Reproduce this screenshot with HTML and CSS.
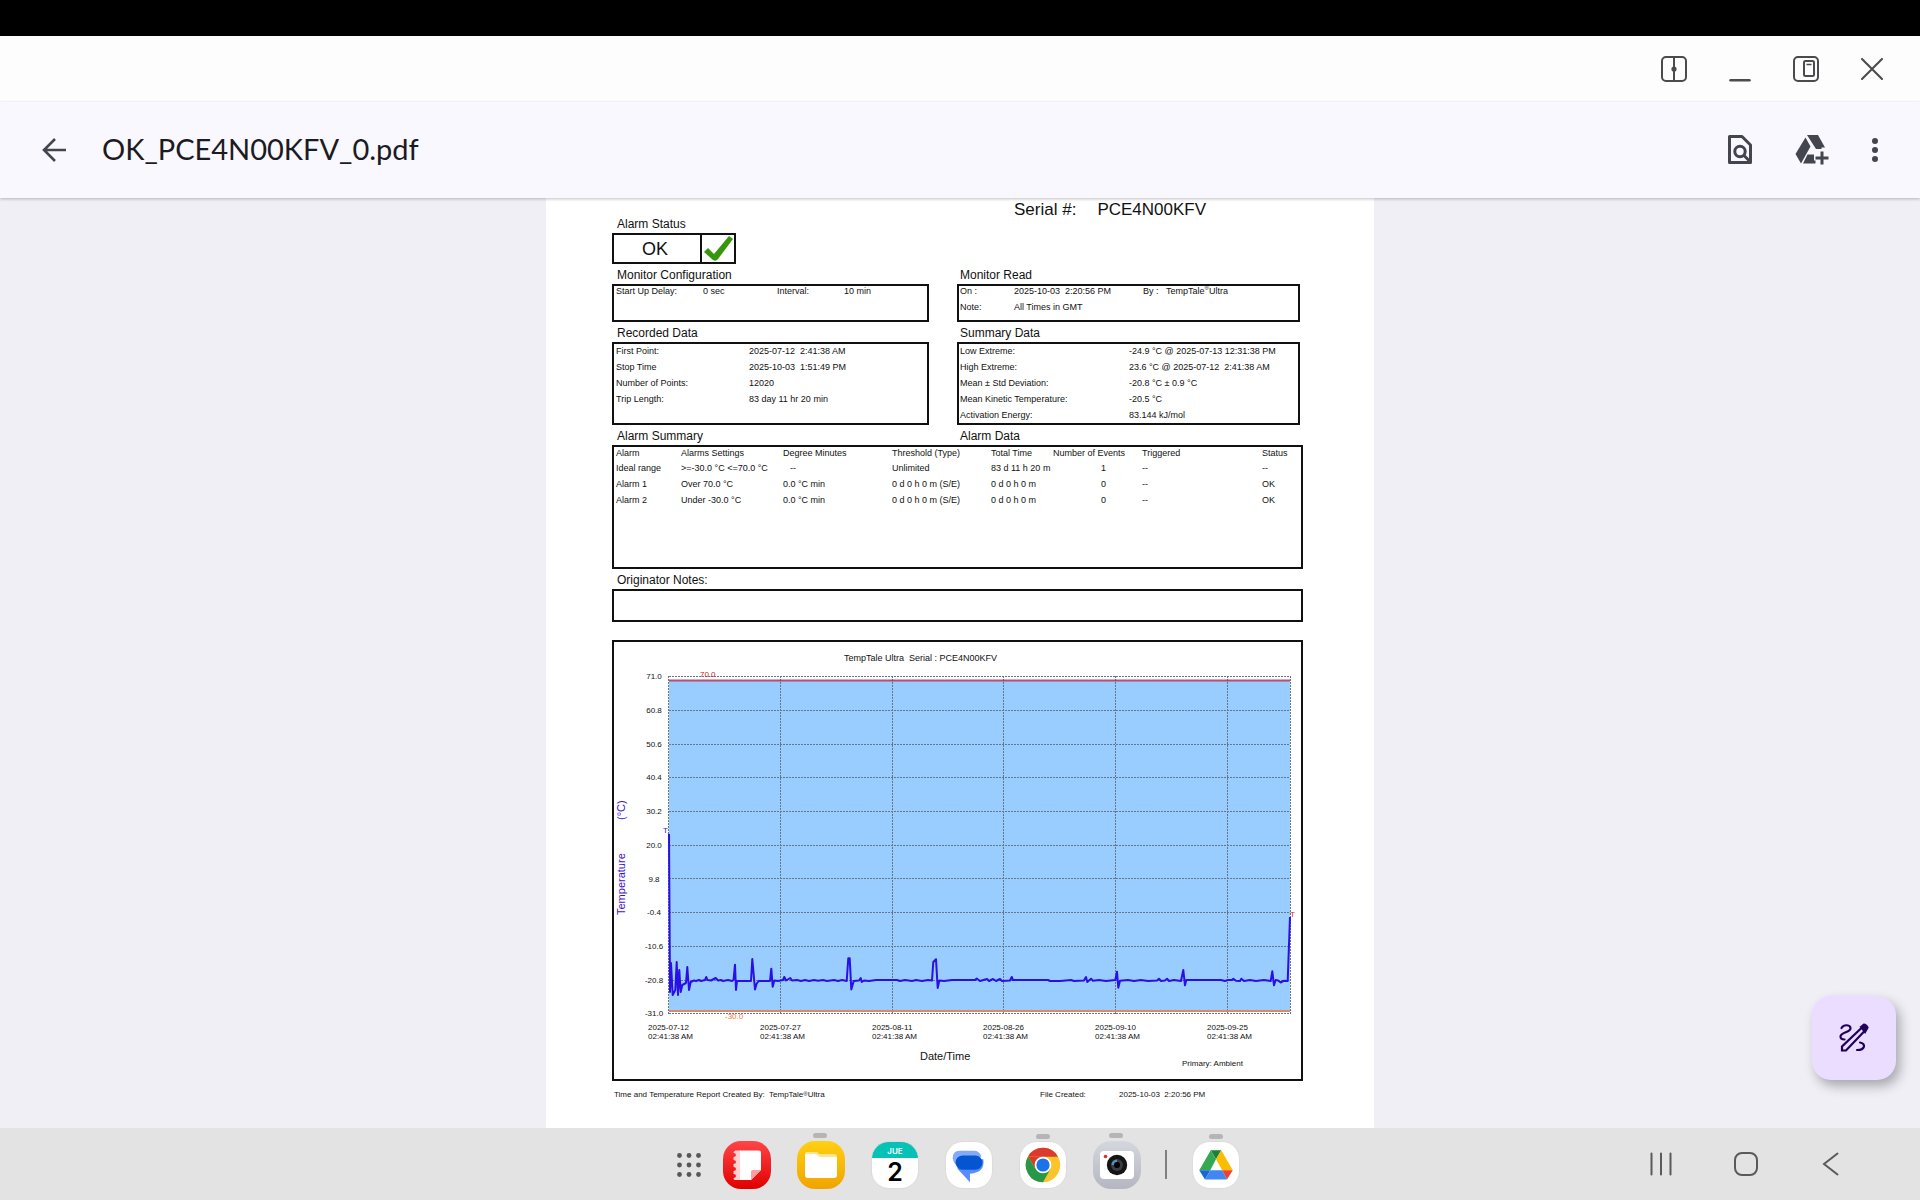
FILE: index.html
```html
<!DOCTYPE html>
<html lang="es">
<head>
    <meta charset="UTF-8">
    <meta name="viewport" content="width=device-width, initial-scale=1.0">
    <title>OK_PCE4N00KFV_0.pdf</title>
    <link rel="stylesheet" href="styles.css">
</head>
<body>
    <div class="status-strip"></div>

    <div class="window-bar">
        <button class="icon-btn" aria-label="Split screen">
            <svg width="28" height="28" viewBox="0 0 28 28" fill="none" stroke="#4b4b4d" stroke-width="2"><rect x="2" y="2" width="24" height="24" rx="4"/><path d="M14 2v24"/><circle cx="14" cy="14" r="1.6" fill="#4b4b4d"/></svg>
        </button>
        <button class="icon-btn" aria-label="Minimize">
            <svg width="28" height="28" viewBox="0 0 28 28" stroke="#4b4b4d" stroke-width="2.4" stroke-linecap="round"><path d="M4.500 25.300h19"/></svg>
        </button>
        <button class="icon-btn" aria-label="Pop-up view">
            <svg width="28" height="28" viewBox="0 0 28 28" fill="none" stroke="#4b4b4d" stroke-width="2"><rect x="2" y="2" width="24" height="24" rx="4"/><rect x="12" y="6" width="10" height="15" rx="1.500"/><path d="M14.500 9.500h5" stroke-width="1.500"/></svg>
        </button>
        <button class="icon-btn" aria-label="Close">
            <svg width="28" height="28" viewBox="0 0 28 28" stroke="#4b4b4d" stroke-width="2.100" stroke-linecap="round"><path d="M4 4l20 20M24 4L4 24"/></svg>
        </button>
    </div>

    <header class="app-bar">
        <button class="icon-btn" aria-label="Back">
            <svg width="28" height="28" viewBox="0 0 28 28" fill="none" stroke="#44464f" stroke-width="2.600"><path d="M26 14H4M15 3L4 14l11 11"/></svg>
        </button>
        <h1>OK_PCE4N00KFV_0.pdf</h1>
        <div class="app-actions">
            <button class="icon-btn" aria-label="Find in file">
                <svg width="32" height="32" viewBox="0 0 32 32" fill="none" stroke="#44464f" stroke-width="3"><path d="M5.500 2.500h12.500l8.500 8.500v17.500h-21z" stroke-linejoin="round"/><circle cx="16" cy="17.500" r="5.200"/><path d="M19.500 21l6.500 6.500"/></svg>
            </button>
            <button class="icon-btn" aria-label="Add to Drive">
                <svg width="36" height="32" viewBox="0 0 36 32" fill="#44464f"><path d="M13 1h11l7 12.500h-3.500v1.500h-5.500zM11.500 3.500l5 9L7 29.500 1.500 20zM13.500 20.500h6.500v6h1.500v3H9z"/><path d="M26.500 17.500h3v5h5v3h-5v5h-3v-5h-5v-3h5z"/></svg>
            </button>
            <button class="icon-btn more" aria-label="More options">
                <svg width="16" height="28" viewBox="0 0 16 28" fill="#44464f"><circle cx="8" cy="5" r="3"/><circle cx="8" cy="14" r="3"/><circle cx="8" cy="23" r="3"/></svg>
            </button>
        </div>
    </header>

    <main class="viewer">
        <article class="page">
            <div class="columns">
                <section class="alarm-status">
                    <h2>Alarm Status</h2>
                    <div class="box status-box">
                        <span>OK</span>
                        <svg width="32" height="27" viewBox="0 0 32 27"><path d="M2 17l4-4 6 6L27 1l4 3-15 20q-2 3-5 1z" fill="#37960b"/></svg>
                    </div>
                </section>
                <p class="serial"><span>Serial #:</span><span>PCE4N00KFV</span></p>
            </div>

            <div class="columns">
                <section>
                    <h2>Monitor Configuration</h2>
                    <dl class="box small-box config">
                        <dt>Start Up Delay:</dt><dd>0 sec</dd>
                        <dt>Interval:</dt><dd>10 min</dd>
                    </dl>
                </section>
                <section class="right">
                    <h2>Monitor Read</h2>
                    <dl class="box small-box read">
                        <dt>On :</dt><dd>2025-10-03&nbsp; 2:20:56 PM</dd>
                        <dt>By :</dt><dd>TempTale<sup>®</sup>Ultra</dd>
                        <dt>Note:</dt><dd>All Times in GMT</dd>
                    </dl>
                </section>
            </div>

            <div class="columns">
                <section>
                    <h2>Recorded Data</h2>
                    <dl class="box data-box recorded">
                        <dt>First Point:</dt><dd>2025-07-12&nbsp; 2:41:38 AM</dd>
                        <dt>Stop Time</dt><dd>2025-10-03&nbsp; 1:51:49 PM</dd>
                        <dt>Number of Points:</dt><dd>12020</dd>
                        <dt>Trip Length:</dt><dd>83 day 11 hr 20 min</dd>
                    </dl>
                </section>
                <section class="right">
                    <h2>Summary Data</h2>
                    <dl class="box data-box summary">
                        <dt>Low Extreme:</dt><dd>-24.9 °C @ 2025-07-13 12:31:38 PM</dd>
                        <dt>High Extreme:</dt><dd>23.6 °C @ 2025-07-12&nbsp; 2:41:38 AM</dd>
                        <dt>Mean ± Std Deviation:</dt><dd>-20.8 °C ± 0.9 °C</dd>
                        <dt>Mean Kinetic Temperature:</dt><dd>-20.5 °C</dd>
                        <dt>Activation Energy:</dt><dd>83.144 kJ/mol</dd>
                    </dl>
                </section>
            </div>

            <section>
                <div class="columns">
                    <h2>Alarm Summary</h2>
                    <h2 class="right-title">Alarm Data</h2>
                </div>
                <div class="box alarm-box">
                    <table>
                        <colgroup>
                            <col class="c-alarm"><col class="c-settings"><col class="c-degree"><col class="c-threshold">
                            <col class="c-total"><col class="c-events"><col class="c-triggered"><col>
                        </colgroup>
                        <thead>
                            <tr><th>Alarm</th><th>Alarms Settings</th><th>Degree Minutes</th><th>Threshold (Type)</th><th>Total Time</th><th>Number of Events</th><th>Triggered</th><th>Status</th></tr>
                        </thead>
                        <tbody>
                            <tr><td>Ideal range</td><td>&gt;=-30.0 °C &lt;=70.0 °C</td><td class="none">--</td><td>Unlimited</td><td>83 d 11 h 20 m</td><td class="count">1</td><td>--</td><td>--</td></tr>
                            <tr><td>Alarm 1</td><td>Over 70.0 °C</td><td>0.0 °C min</td><td>0 d 0 h 0 m (S/E)</td><td>0 d 0 h 0 m</td><td class="count">0</td><td>--</td><td>OK</td></tr>
                            <tr><td>Alarm 2</td><td>Under -30.0 °C</td><td>0.0 °C min</td><td>0 d 0 h 0 m (S/E)</td><td>0 d 0 h 0 m</td><td class="count">0</td><td>--</td><td>OK</td></tr>
                        </tbody>
                    </table>
                </div>
            </section>

            <section>
                <h2>Originator Notes:</h2>
                <div class="box notes-box"></div>
            </section>

            <div class="box chart-box">
                <svg class="chart" viewBox="0 0 687 437">
                    <rect x="55" y="39" width="621" height="330" fill="#99ccff"/>
                    <!-- grid -->
                    <g class="grid">
                        <path d="M55 34.500H676M55 68.500H676M55 102.500H676M55 135.500H676M55 169.500H676M55 203.500H676M55 236.500H676M55 270.500H676M55 304.500H676M55 338.500H676M55 371.500H676"/>
                        <path d="M54.500 34V372M166.500 34V372M278.500 34V372M389.500 34V372M501.500 34V372M613.500 34V372M676.500 34V372"/>
                    </g>
                    <!-- limits -->
                    <path d="M55 38.500H676" stroke="#b02045" stroke-opacity=".8" stroke-width="2"/>
                    <path d="M55 369H676" stroke="#e08a62" stroke-width="2"/>
                    <!-- readings -->
                    <polyline class="readings" points="55,192 56,350 57,321 58.700,353 61.300,348 62.700,320 64,353 65.300,328 66.700,350 68.300,343 72,341 73.300,325 75,348 76.700,340 80,338.500 82,339 85,338 87,339 91,338 92.300,335 93.500,338 97,338.500 101.700,336 104,338.500 107,338 109,339 114,338 118,339 119.500,338 121,322.700 122,348 123,339 137,339 138.300,317 141,347.500 142.700,341.500 144.700,339 156,339 157.300,326.700 158.700,344.700 160.300,338.500 164,339 169,338 170.300,335 172,338.500 176.300,336 178,338.500 183,338 187,339 191,338 195,339 200,338 204,338.700 209,338 213,339 220,338 224,339 228,338 232.700,339 234.300,316.300 235.700,316.300 237.300,347.500 239.700,339 245,338.500 246.700,336 247.700,340 250,338.500 255,339 262,338 283,338 286,339 291,338 298,339 302,338 308,339 314,338 318,338.500 319.300,320 322,317.300 323.700,346 325.300,338.500 330,339 338,338 361,338 362.700,336.500 366,339 373,337 375,339 379,337 382,339 386,337 388,339 396,338.500 397.700,335 399,338 434,338 436,339 446,339 457,338 460,339 470,338.500 472,335 473.300,340 477,336.700 479,338.700 485,338 492,339 501.300,338 503,329.700 504.300,345.700 506,338.700 514,338 520,339 527,338 534,339 543,338.500 545,336.700 547,339 551,338.500 553,336.700 555,339 560,338 567,339 569.300,328 571,343.300 572.300,338 607,338 611,339 614,338 618,338 619.300,336.700 622,338.700 626,339 627.300,336.700 630,339 636,338 642,339 650,338 656.700,339 658.300,329.300 660,343.300 661.700,338 664,338.500 666.700,340.500 670,338.700 673.700,339 676,275"/>
                    <!-- labels -->
                    <g class="tick y-tick">
                        <text x="40" y="37">71.0</text><text x="40" y="71">60.8</text><text x="40" y="105">50.6</text><text x="40" y="138">40.4</text><text x="40" y="172">30.2</text><text x="40" y="206">20.0</text><text x="40" y="240">9.8</text><text x="40" y="273">-0.4</text><text x="40" y="307">-10.6</text><text x="40" y="341">-20.8</text><text x="40" y="374">-31.0</text>
                    </g>
                    <g class="tick">
                        <text x="34" y="388">2025-07-12</text><text x="34" y="397">02:41:38 AM</text>
                        <text x="146" y="388">2025-07-27</text><text x="146" y="397">02:41:38 AM</text>
                        <text x="258" y="388">2025-08-11</text><text x="258" y="397">02:41:38 AM</text>
                        <text x="369" y="388">2025-08-26</text><text x="369" y="397">02:41:38 AM</text>
                        <text x="481" y="388">2025-09-10</text><text x="481" y="397">02:41:38 AM</text>
                        <text x="593" y="388">2025-09-25</text><text x="593" y="397">02:41:38 AM</text>
                        <text x="568" y="424">Primary: Ambient</text>
                        <text x="86" y="35" fill="#cc2222">70.0</text>
                        <text x="111" y="377" fill="#f07838">-30.0</text>
                        <text x="49" y="191" fill="#3a10e0">T</text>
                        <text x="676" y="275" fill="#e02040">T</text>
                    </g>
                    <text class="chart-title" x="230" y="19">TempTale Ultra&nbsp; Serial : PCE4N00KFV</text>
                    <text class="axis-title" x="306" y="418">Date/Time</text>
                    <text class="axis-title" transform="translate(11 273) rotate(-90)" fill="#3a10e0">Temperature</text>
                    <text class="axis-title" transform="translate(11 178) rotate(-90)" fill="#3a10e0">(°C)</text>
                </svg>
            </div>

            <footer class="page-footer">
                <span>Time and Temperature Report Created By:&nbsp; TempTale<sup>®</sup>Ultra</span>
                <span>File Created:</span>
                <span>2025-10-03&nbsp; 2:20:56 PM</span>
            </footer>
        </article>

        <button class="fab" aria-label="Annotate">
            <svg width="30" height="30" viewBox="0 0 30 30" fill="none" stroke="#21005d" stroke-width="2.200"><path d="M2.500 5C5 1 11.500 1.500 11.500 5.500c0 4-10 3.500-10 8 0 1.500 1.500 3 4 3" stroke-linecap="round"/><path d="M3 27.500v-4L24 3.500l3 3L7 27.500z"/><path d="M22 4l3-2.500q2 0 3.500 3L26 9z" fill="#21005d"/><path d="M21 19.500c6 1 5.500 7.500-3 7.500" stroke-linecap="round"/></svg>
        </button>
    </main>

    <nav class="taskbar">
        <div class="dock">
            <button class="icon-btn apps" aria-label="Apps">
                <svg width="24" height="24" viewBox="0 0 24 24" fill="#575757"><circle cx="2.500" cy="2.500" r="2.400"/><circle cx="12" cy="2.500" r="2.400"/><circle cx="21.500" cy="2.500" r="2.400"/><circle cx="2.500" cy="12" r="2.400"/><circle cx="12" cy="12" r="2.400"/><circle cx="21.500" cy="12" r="2.400"/><circle cx="2.500" cy="21.500" r="2.400"/><circle cx="12" cy="21.500" r="2.400"/><circle cx="21.500" cy="21.500" r="2.400"/></svg>
            </button>
            <button class="app notes" aria-label="Notes">
                <svg viewBox="0 0 48 48"><path d="M12 9.500h6v29.500h-6q-1.500 0-1.500-2 2.500 0 2.500-2t-2.500-2v-3q2.500 0 2.500-2t-2.500-2v-3q2.500 0 2.500-2t-2.500-2v-3q2.500 0 2.500-2t-2.500-2q0-2 1.500-2z" fill="#ffd0d0"/><path d="M17 9.500h19q2 0 2 2V29L28 39H17z" fill="#fff"/><path d="M38 29L28 39v-8q0-2 2-2z" fill="#ff9c9c"/></svg>
            </button>
            <button class="app files running" aria-label="My Files">
                <svg viewBox="0 0 48 48"><path d="M8 16v-3q0-2 2-2h9q2 0 3 2h15q3 0 3 3z" fill="#ffe48a"/><path d="M8 13h11l4 3h17v18q0 3-3 3H11q-3 0-3-3z" fill="#fff"/></svg>
            </button>
            <button class="app calendar" aria-label="Calendar">
                <span class="month">JUE</span>
                <span class="day">2</span>
            </button>
            <button class="app" aria-label="Messages">
                <svg viewBox="0 0 48 48"><path d="M14 9h15q6 0 8 6l-22 12Q8 24 7 17 7 9 14 9z" fill="#83a9fb"/><path d="M17 18h22q2 14-14 15v9L12 28z" fill="#588bff"/><rect x="10" y="14" width="28" height="15" rx="7.500" fill="#0455cf"/></svg>
            </button>
            <button class="app running" aria-label="Chrome">
                <svg viewBox="0 0 48 48"><circle cx="24" cy="24" r="18" fill="#fcc42b"/><path d="M24 15.300L39.600 15.300A18 18 0 0 0 8.400 15z" fill="#db3b2e"/><path d="M8.400 15L16.400 28.400 24 15.300z" fill="#db3b2e"/><path d="M8.400 15A18 18 0 0 0 24 42L31.600 28.400 24 24 16.400 28.400z" fill="#27984a"/><circle cx="24" cy="24" r="8.700" fill="#fff"/><circle cx="24" cy="24" r="6.900" fill="#1a73e8"/></svg>
            </button>
            <button class="app camera running" aria-label="Camera">
                <svg viewBox="0 0 48 48"><rect x="7" y="10" width="34" height="28" rx="4" fill="#fff"/><circle cx="12.500" cy="15.500" r="1.800" fill="#dd2c2c"/><circle cx="24" cy="24" r="10.200" fill="#151515"/><circle cx="24" cy="24" r="6" fill="#3b3d44"/><path d="M18.500 24a5.500 5.500 0 0 1 5.500-5.500v5.500z" fill="#4b96bb"/><circle cx="24" cy="24" r="3" fill="#000"/></svg>
            </button>
            <span class="divider"></span>
            <button class="app running" aria-label="Drive">
                <svg viewBox="0 0 48 48"><path d="M18.500 8.500h11L24 18z" fill="#188038"/><path d="M18.500 8.500L24 18l-6 11.500H6.500z" fill="#34a853"/><path d="M29.500 8.500L24 18l6.500 11.500h11z" fill="#fbbc04"/><path d="M6.500 29.500H18L12.500 39z" fill="#1967d2"/><path d="M18 29.500h12.500L35.500 39h-23z" fill="#4285f4"/><path d="M30.500 29.500h11L35.500 39z" fill="#ea4335"/></svg>
            </button>
        </div>
        <div class="nav-keys">
            <button class="icon-btn" aria-label="Recents">
                <svg width="24" height="24" viewBox="0 0 24 24" stroke="#5a5a5a" stroke-width="2" stroke-linecap="round"><path d="M2.500 1.500v21M12 1.500v21M21.500 1.500v21"/></svg>
            </button>
            <button class="icon-btn" aria-label="Home">
                <svg width="24" height="24" viewBox="0 0 24 24" fill="none" stroke="#5a5a5a" stroke-width="2"><rect x="1" y="1" width="22" height="22" rx="7"/></svg>
            </button>
            <button class="icon-btn" aria-label="Back">
                <svg width="24" height="24" viewBox="0 0 24 24" fill="none" stroke="#5a5a5a" stroke-width="2" stroke-linecap="round"><path d="M18.500 1.500L5 12l13.500 10.500"/></svg>
            </button>
        </div>
    </nav>
</body>
</html>
```

FILE: styles.css
```css
* {
    box-sizing: border-box;
}
body {
    margin: 0;
    height: 100vh;
    display: flex;
    flex-direction: column;
    overflow: hidden;
    font-family: "Liberation Sans", Arial, sans-serif;
    background-color: #f0eff6;
}
button {
    border: none;
    padding: 0;
    background: none;
    cursor: pointer;
}
h1, h2, p, dl, dd {
    margin: 0;
    font-weight: normal;
}
svg {
    display: block;
}
.icon-btn {
    display: flex;
    align-items: center;
    justify-content: center;
}

/* window chrome */
.status-strip {
    flex: none;
    height: 36px;
    background-color: #000;
}
.window-bar {
    flex: none;
    height: 66px;
    display: flex;
    align-items: center;
    justify-content: flex-end;
    gap: 38px;
    padding: 0 34px;
    background-color: #fdfdfe;
}
.app-bar {
    flex: none;
    height: 96px;
    display: flex;
    align-items: center;
    padding: 0 37px 0 40px;
    background-color: #f9f8fe;
    box-shadow: 0 1px 3px rgba(0, 0, 0, 0.25);
    z-index: 1;
}
.app-bar h1 {
    flex: 1;
    margin-left: 34px;
    padding-bottom: 2px;
    font-family: Lato, sans-serif;
    font-size: 29px;
    line-height: 36px;
    color: #1b1b21;
}
.app-actions {
    display: flex;
    align-items: center;
    gap: 38px;
}
.app-actions .more {
    margin-left: -1px;
}

/* document */
.viewer {
    flex: 1;
    min-height: 0;
    overflow: hidden;
    position: relative;
}
.page {
    width: 100%;
    max-width: 828px;
    min-height: 100%;
    margin: 0 auto;
    padding: 0 71px 0 66px;
    background-color: #fff;
    color: #111;
    font-size: 9px;
    line-height: 10px;
}
.columns {
    display: grid;
    grid-template-columns: 317fr 343fr;
    column-gap: 28px;
    padding-right: 3px;
}
.page h2 {
    margin-top: 2px;
    padding-left: 5px;
    font-size: 12px;
    line-height: 18px;
}
.page .right h2, .page .right-title {
    padding-left: 3px;
}
.box {
    border: 2px solid #111;
}
.alarm-status {
    padding-top: 15px;
}
.status-box {
    display: flex;
    width: 124px;
    height: 31px;
}
.status-box span {
    flex: 1;
    padding-right: 4px;
    border-right: 2px solid #111;
    font-size: 18px;
    line-height: 28px;
    text-align: center;
}
.serial {
    display: flex;
    gap: 21px;
    padding: 3px 0 0 57px;
    font-size: 17px;
    line-height: 18px;
}
dl.box {
    display: grid;
    align-content: start;
    row-gap: 6px;
    padding-left: 2px;
}
.right dl.box {
    padding-left: 1px;
}
.small-box {
    height: 38px;
}
dl.data-box {
    height: 83px;
    padding-top: 2px;
}
.config {
    grid-template-columns: 87px 74px 67px 1fr;
}
.read {
    grid-template-columns: 54px 129px 23px 1fr;
}
.recorded {
    grid-template-columns: 133px 1fr;
}
.summary {
    grid-template-columns: 169px 1fr;
}
sup {
    font-size: 6px;
    line-height: 0;
}
.alarm-box {
    height: 124px;
}
table {
    width: 100%;
    table-layout: fixed;
    border-collapse: collapse;
}
th, td {
    padding: 0 0 6px 2px;
    font-weight: normal;
    text-align: left;
    white-space: nowrap;
}
th {
    padding: 1px 0 5px 2px;
}
td.none {
    padding-left: 9px;
}
td.count {
    padding-left: 50px;
}
.c-alarm {
    width: 65px;
}
.c-settings {
    width: 102px;
}
.c-degree {
    width: 109px;
}
.c-threshold {
    width: 99px;
}
.c-total {
    width: 62px;
}
.c-events {
    width: 89px;
}
.c-triggered {
    width: 120px;
}
.notes-box {
    height: 33px;
}
.chart-box {
    margin-top: 18px;
}
.chart {
    width: 100%;
    height: auto;
    fill: #111;
}
.grid path {
    fill: none;
    stroke: #667788;
    stroke-dasharray: 2 1;
}
.readings {
    fill: none;
    stroke: #2a10e8;
    stroke-width: 2;
    stroke-linejoin: round;
}
.tick {
    font-size: 8px;
}
.y-tick {
    text-anchor: middle;
}
.chart-title {
    font-size: 9px;
}
.axis-title {
    font-size: 11px;
}
.page-footer {
    display: grid;
    grid-template-columns: 426px 79px 1fr;
    margin-top: 9px;
    padding-left: 2px;
    font-size: 8px;
}
.page-footer sup {
    vertical-align: 1px;
}

.fab {
    position: absolute;
    right: 24px;
    bottom: 48px;
    width: 84px;
    height: 84px;
    display: flex;
    align-items: center;
    justify-content: center;
    border-radius: 19px;
    background-color: #ebddff;
    box-shadow: 4px 6px 12px rgba(0, 0, 0, 0.3);
}

/* taskbar */
.taskbar {
    flex: none;
    height: 72px;
    display: grid;
    grid-template-columns: 1fr auto 1fr;
    align-items: center;
    background-color: #e3e3e3;
}
.dock {
    grid-column: 2;
    display: flex;
    align-items: center;
    gap: 26px;
    padding: 1px 3px 0 0;
}
.apps {
    margin-right: -4px;
}
.app {
    position: relative;
    width: 48px;
    height: 48px;
    border: 1px solid #dcdcdc;
    border-radius: 18px;
    background-color: #fff;
}
.app svg {
    width: 46px;
    height: 46px;
}
.running::before {
    content: "";
    position: absolute;
    top: -8px;
    left: 16px;
    width: 14px;
    height: 5px;
    border-radius: 3px;
    background-color: #b5b5b5;
}
.notes {
    border: none;
    background: linear-gradient(#ff4548, #e00000);
}
.files {
    border: none;
    background: linear-gradient(#ffd012, #f0a400);
}
.camera {
    border: none;
    background: linear-gradient(#d4d7dd, #b4b7c1);
}
.notes svg, .files svg, .camera svg {
    width: 48px;
    height: 48px;
}
.calendar {
    display: flex;
    flex-direction: column;
    align-items: center;
    background: linear-gradient(#06c1b5 16px, #fff 16px);
    font-family: Inter, sans-serif;
}
.month {
    padding-top: 2px;
    font-size: 8px;
    line-height: 14px;
    font-weight: 600;
    color: #fff;
}
.day {
    font-size: 25px;
    line-height: 28px;
    font-weight: 600;
    color: #000;
}
.divider {
    width: 2px;
    height: 29px;
    margin: 0 -1px 0 -2px;
    background-color: #808080;
}
.nav-keys {
    display: flex;
    justify-content: flex-end;
    gap: 61px;
    padding-right: 77px;
}
```
